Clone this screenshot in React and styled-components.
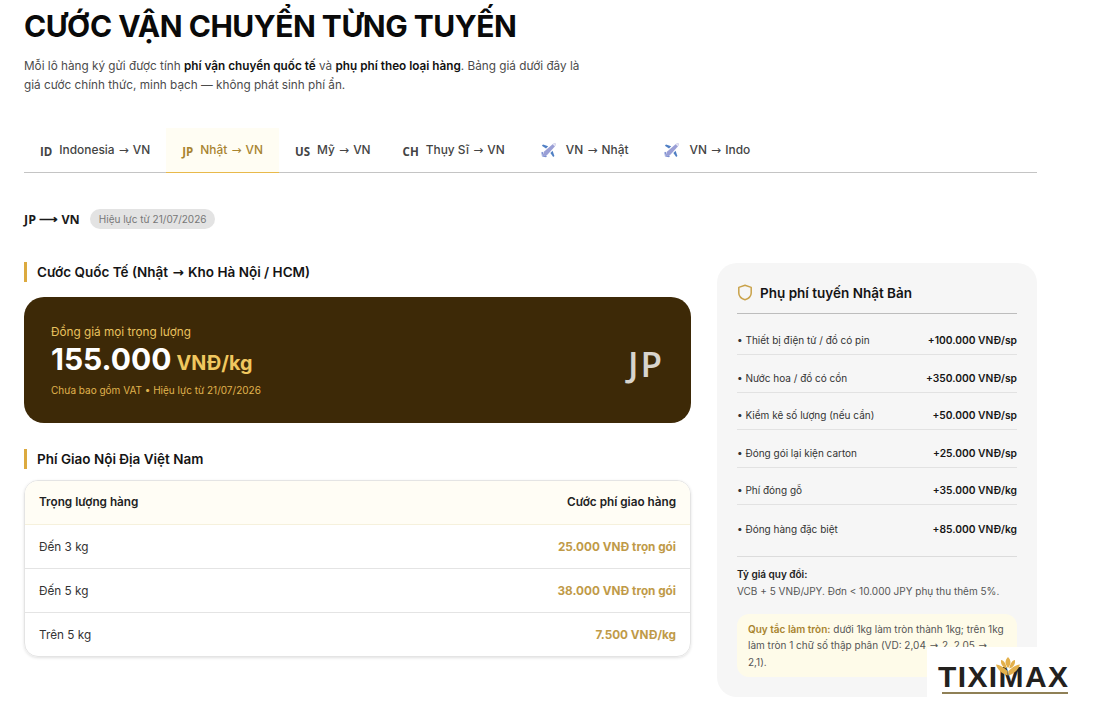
import React from 'react'
import styled, { createGlobalStyle } from 'styled-components'

const GlobalStyle = createGlobalStyle`
  html, body { margin: 0; padding: 0; background: #fff; }
  body { font-family: Inter, "Noto Sans", sans-serif; color: #111; overflow: hidden; }
`

const tabs = [
  { code: 'ID', from: 'Indonesia', to: 'VN' },
  { code: 'JP', from: 'Nhật', to: 'VN', active: true },
  { code: 'US', from: 'Mỹ', to: 'VN' },
  { code: 'CH', from: 'Thụy Sĩ', to: 'VN' },
  { plane: true, from: 'VN', to: 'Nhật' },
  { plane: true, from: 'VN', to: 'Indo' },
]

const deliveryRows = [
  ['Đến 3 kg', '25.000 VNĐ trọn gói'],
  ['Đến 5 kg', '38.000 VNĐ trọn gói'],
  ['Trên 5 kg', '7.500 VNĐ/kg'],
]

const surcharges = [
  ['Thiết bị điện tử / đồ có pin', '+100.000 VNĐ/sp'],
  ['Nước hoa / đồ có cồn', '+350.000 VNĐ/sp'],
  ['Kiểm kê số lượng (nếu cần)', '+50.000 VNĐ/sp'],
  ['Đóng gói lại kiện carton', '+25.000 VNĐ/sp'],
  ['Phí đóng gỗ', '+35.000 VNĐ/kg'],
  ['Đóng hàng đặc biệt', '+85.000 VNĐ/kg'],
]

const PlaneIcon = () => (
  <svg width="16" height="16" viewBox="0 0 16 16">
    <path d="M1 14.5 L3.2 9.6 L11.6 2.2 Q13.6 .9 14.6 1.4 Q15.2 2.6 13.8 4.4 L6.4 12.8 Z" fill="#9a9fd6" />
    <path d="M7.2 4.2 L2 2.6 L.9 3.7 L5 6.5 Z" fill="#4f7fc4" />
    <path d="M11.6 8.8 L13.4 14 L12.2 15.1 L9.4 11 Z" fill="#4f7fc4" />
    <path d="M11.6 2.2 L13.8 4.4 Q15.2 2.6 14.6 1.4 Q13.6 .9 11.6 2.2 Z" fill="#e6e4f2" />
    <path d="M1 14.5 L2.4 10.6 L1 9.8 L.4 10.4 Z M1 14.5 L5.2 13 L5.8 14.6 L5 15.2 Z" fill="#7c8fd0" />
  </svg>
)

const ShieldIcon = () => (
  <svg width="16" height="17" viewBox="0 0 16 17" fill="none" stroke="#c9a24a" strokeWidth="1.5" strokeLinejoin="round">
    <path d="M8 1.3 L14.2 3.4 V9 C14.2 12.4 11.6 14.6 8 15.8 C4.4 14.6 1.8 12.4 1.8 9 V3.4 Z" />
  </svg>
)

const LotusIcon = () => (
  <svg width="24" height="19" viewBox="0 0 24 19" fill="#e3b04b">
    <path d="M12 0 C15 3 15.6 6.6 12 11 C8.4 6.6 9 3 12 0 Z" />
    <path d="M5 3 C8 3.6 9.6 6 10.8 11.4 C6.8 10.6 4.6 7.6 5 3 Z" />
    <path d="M19 3 C16 3.6 14.4 6 13.2 11.4 C17.2 10.6 19.4 7.6 19 3 Z" />
    <path d="M0 7.4 C3.6 7.6 8 10.4 11.6 14 L11.6 18.6 C6 16.6 1.4 12.6 0 7.4 Z" />
    <path d="M24 7.4 C20.4 7.6 16 10.4 12.4 14 L12.4 18.6 C18 16.6 22.6 12.6 24 7.4 Z" />
  </svg>
)

export default function App() {
  return (
    <>
      <GlobalStyle />
      <Page>
        <Title>CƯỚC VẬN CHUYỂN TỪNG TUYẾN</Title>
        <Intro>
          Mỗi lô hàng ký gửi được tính <b>phí vận chuyển quốc tế</b> và <b>phụ phí theo loại hàng</b>. Bảng giá dưới đây là giá cước chính thức, minh bạch — không phát sinh phí ẩn.
        </Intro>

        <TabBar>
          {tabs.map((t) => (
            <Tab key={t.from + t.to} $active={t.active}>
              {t.plane ? <PlaneIcon /> : <FlagCode>{t.code}</FlagCode>}
              <TabLabel>{t.from} <Arrow>→</Arrow> {t.to}</TabLabel>
            </Tab>
          ))}
        </TabBar>

        <RouteRow>
          <RouteName>JP ⟶ VN</RouteName>
          <DateBadge>Hiệu lực từ 21/07/2026</DateBadge>
        </RouteRow>

        <Columns>
          <MainColumn>
            <SectionTitle>Cước Quốc Tế (Nhật <Arrow>→</Arrow> Kho Hà Nội / HCM)</SectionTitle>
            <PriceCard>
              <div>
                <PriceLabel>Đồng giá mọi trọng lượng</PriceLabel>
                <PriceLine>
                  <PriceValue>155.000</PriceValue>
                  <PriceUnit>VNĐ/kg</PriceUnit>
                </PriceLine>
                <PriceNote>Chưa bao gồm VAT • Hiệu lực từ 21/07/2026</PriceNote>
              </div>
              <PriceFlag>JP</PriceFlag>
            </PriceCard>

            <SectionTitle>Phí Giao Nội Địa Việt Nam</SectionTitle>
            <DeliveryTable>
              <DeliveryHead>
                <span>Trọng lượng hàng</span>
                <span>Cước phí giao hàng</span>
              </DeliveryHead>
              {deliveryRows.map(([weight, fee]) => (
                <DeliveryRow key={weight}>
                  <span>{weight}</span>
                  <DeliveryFee>{fee}</DeliveryFee>
                </DeliveryRow>
              ))}
            </DeliveryTable>
          </MainColumn>

          <SidePanel>
            <PanelTitle>
              <ShieldIcon />
              <span>Phụ phí tuyến Nhật Bản</span>
            </PanelTitle>
            <SurchargeList>
              {surcharges.map(([name, price]) => (
                <SurchargeRow key={name}>
                  <span>• {name}</span>
                  <b>{price}</b>
                </SurchargeRow>
              ))}
            </SurchargeList>
            <RateBlock>
              <b>Tỷ giá quy đổi:</b>
              <p>VCB + 5 VNĐ/JPY. Đơn &lt; 10.000 JPY phụ thu thêm 5%.</p>
            </RateBlock>
            <RuleNote>
              <b>Quy tắc làm tròn:</b> dưới 1kg làm tròn thành 1kg; trên 1kg làm tròn 1 chữ số thập phân (VD: 2,04 <Arrow>→</Arrow> 2, 2,05 <Arrow>→</Arrow> 2,1).
            </RuleNote>
          </SidePanel>
        </Columns>
      </Page>

      <Watermark>
        <WatermarkText>TIXIMAX</WatermarkText>
        <WatermarkLotus><LotusIcon /></WatermarkLotus>
      </Watermark>
    </>
  )
}

const Page = styled.div`
  width: 1013px;
  height: 725px;
  padding: 0 0 0 24px;
  overflow: hidden;
`

const Title = styled.h1`
  margin: 0;
  padding-top: 8px;
  font-size: 30px;
  line-height: 36px;
  font-weight: 700;
  letter-spacing: -0.5px;
  color: #0a0a0a;
`

const Intro = styled.p`
  margin: 13px 0 0;
  width: 570px;
  font-size: 11.75px;
  line-height: 19px;
  color: #4b4b4b;

  b {
    font-weight: 600;
    color: #111;
  }
`

/* the reference's arrow comes from a fallback font, longer than Inter's */
const Arrow = styled.span`
  margin: 0 1px;
  font-family: "DejaVu Sans", sans-serif;
`

const TabBar = styled.div`
  display: flex;
  margin-top: 33px;
  height: 44px;
  border-bottom: 1px solid #c4c4c4;
`

const Tab = styled.div`
  display: flex;
  align-items: center;
  gap: 7px;
  height: 45px;
  box-sizing: border-box;
  padding: 0 16px 1px;
  font-weight: 500;
  color: ${(p) => (p.$active ? '#a8842f' : '#444')};
  background: ${(p) => (p.$active ? '#fffdf3' : 'transparent')};
  border-bottom: 1px solid ${(p) => (p.$active ? '#e8b94a' : 'transparent')};

  svg {
    margin: 0 2px 0 4px;
  }
`

const TabLabel = styled.span`
  font-size: 11.9px;
`

const FlagCode = styled.span`
  font-family: "Open Sans", sans-serif;
  font-size: 11.5px;
  font-weight: 700;
  position: relative;
  top: 1.5px;
`

const RouteRow = styled.div`
  display: flex;
  align-items: center;
  gap: 10px;
  margin-top: 35px;
  height: 22px;
`

const RouteName = styled.span`
  font-family: "Open Sans", sans-serif;
  font-size: 12.5px;
  font-weight: 700;
  color: #1a1a1a;
`

const DateBadge = styled.span`
  padding: 0 9px;
  height: 20px;
  line-height: 20px;
  border-radius: 10px;
  background: #e3e3e3;
  font-size: 10px;
  color: #777;
`

const Columns = styled.div`
  display: flex;
  gap: 26px;
  margin-top: 32px;
  align-items: flex-start;
`

const MainColumn = styled.div`
  width: 667px;
`

const SectionTitle = styled.h2`
  margin: 0;
  height: 20px;
  line-height: 20px;
  padding-left: 10px;
  border-left: 3px solid #dcaa3f;
  font-size: 13.5px;
  font-weight: 600;
  color: #141414;
`

const PriceCard = styled.div`
  display: flex;
  align-items: center;
  justify-content: space-between;
  box-sizing: border-box;
  height: 126px;
  margin: 15px 0 26px;
  padding: 0 27px;
  border-radius: 20px;
  background: #3d2907;
`

const PriceLabel = styled.div`
  font-size: 11.75px;
  line-height: 16px;
  color: #e9c25f;
`

const PriceLine = styled.div`
  display: flex;
  align-items: baseline;
  gap: 5px;
  margin-top: 1px;
  height: 36px;
`

const PriceValue = styled.span`
  font-size: 30px;
  line-height: 36px;
  font-weight: 700;
  color: #fff;
`

const PriceUnit = styled.span`
  font-size: 19.75px;
  font-weight: 700;
  color: #f0c75f;
`

const PriceNote = styled.div`
  margin-top: 6px;
  font-size: 10px;
  line-height: 14px;
  color: #e0b44e;
`

const PriceFlag = styled.span`
  margin-top: 6px;
  font-family: "Open Sans", sans-serif;
  font-size: 35px;
  font-weight: 600;
  letter-spacing: 2px;
  color: #fff;
  opacity: 0.8;
`

const DeliveryTable = styled.div`
  margin-top: 11px;
  border: 1px solid #e4e4e4;
  border-radius: 14px;
  overflow: hidden;
  box-shadow: 0 1px 3px rgba(0, 0, 0, 0.12);
`

const DeliveryHead = styled.div`
  display: flex;
  justify-content: space-between;
  align-items: center;
  height: 44px;
  padding: 0 14px 2px;
  box-sizing: border-box;
  background: #fffdf5;
  border-bottom: 1px solid #f6f1dc;
  font-size: 11.75px;
  font-weight: 600;
  color: #222;
`

const DeliveryRow = styled.div`
  display: flex;
  justify-content: space-between;
  align-items: center;
  height: 43px;
  padding: 0 14px;
  font-size: 11.75px;
  color: #333;

  & + & {
    border-top: 1px solid #e4e4e4;
  }
`

const DeliveryFee = styled.span`
  font-weight: 700;
  color: #bf9a48;
`

const SidePanel = styled.aside`
  box-sizing: border-box;
  width: 320px;
  height: 434px;
  margin-top: 1px;
  padding: 19px 20px 0;
  border-radius: 20px;
  background: #f6f6f6;
`

const PanelTitle = styled.div`
  display: flex;
  align-items: center;
  gap: 7px;
  height: 21px;
  padding-bottom: 10px;
  border-bottom: 1px solid #bdbdbd;
  font-size: 13.5px;
  font-weight: 600;
  color: #141414;
`

const SurchargeList = styled.div`
  padding: 3.5px 0 13.5px;
  margin-bottom: 9px;
  border-bottom: 1px solid #dcdcdc;
`

const SurchargeRow = styled.div`
  display: flex;
  justify-content: space-between;
  align-items: flex-end;
  box-sizing: border-box;
  height: 37.5px;
  padding-bottom: 7px;
  font-size: 10px;
  line-height: 13px;
  color: #333;
  border-bottom: 1px solid #e2e2e2;

  b {
    font-weight: 600;
    font-size: 10.25px;
    color: #161616;
  }

  &:last-child {
    border-bottom: 0;
  }
`

const RateBlock = styled.div`
  font-size: 10px;
  line-height: 17px;
  color: #555;

  b {
    font-weight: 600;
    color: #222;
  }

  p {
    margin: 0;
  }
`

const RuleNote = styled.div`
  margin-top: 14px;
  padding: 7px 12px 7px 11px;
  border-radius: 12px;
  background: #fefbe9;
  font-size: 10px;
  line-height: 16px;
  color: #555;

  b {
    font-weight: 600;
    color: #a8842f;
  }
`

/* logo stamped over the bottom right corner of the shot */
const Watermark = styled.div`
  position: absolute;
  left: 927px;
  top: 647px;
  width: 170px;
  height: 50px;
  background: #fff;

  &::after {
    content: '';
    position: absolute;
    left: 15px;
    top: 45px;
    width: 126px;
    height: 2px;
    background: #8f8056;
  }
`

const WatermarkLotus = styled.div`
  position: absolute;
  left: 69px;
  top: 10px;
  line-height: 0;
`

const WatermarkText = styled.div`
  position: absolute;
  left: 11px;
  top: 16px;
  font-family: "Liberation Sans", sans-serif;
  font-size: 30px;
  line-height: 28px;
  font-weight: 700;
  letter-spacing: 1.4px;
  color: #23211e;
`
